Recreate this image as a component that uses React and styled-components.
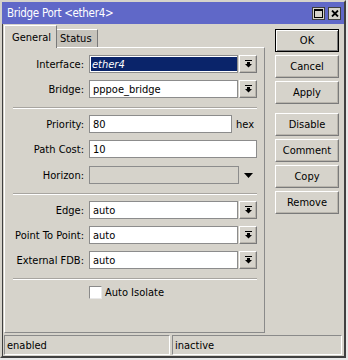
import React from 'react';
import styled, { createGlobalStyle, css } from 'styled-components';

const FACE = '#d6d3cb';
const FONT = '"DejaVu Sans Condensed", "Liberation Sans", sans-serif';

const Global = createGlobalStyle`
  html, body { margin: 0; padding: 0; }
  body {
    background: #e8e8e8;
    width: 348px;
    height: 360px;
    overflow: hidden;
    font-family: ${FONT};
    font-size: 11px;
    color: #000;
  }
`;

const raised = css`
  border: 1px solid;
  border-color: #ffffff #7a7a7a #7a7a7a #ffffff;
  box-shadow: inset -1px -1px 0 #b8b4ac;
`;

const Window = styled.div`
  width: 346px;
  height: 358px;
  box-sizing: border-box;
  background: ${FACE};
  border-style: solid;
  border-width: 2px;
  border-color: ${FACE} #404040 #404040 ${FACE};
  display: flex;
  flex-direction: column;
`;

const TitleBar = styled.div`
  height: 22px;
  flex: none;
  background: #6068c8;
  color: #fff;
  display: flex;
  align-items: center;
  padding: 0 3px 0 5px;
  font-size: 11.5px;
  letter-spacing: -0.3px;
`;

const TitleText = styled.div`
  flex: 1;
  white-space: nowrap;
`;

const TitleButtons = styled.div`
  display: flex;
  gap: 3px;
`;

const TitleButton = styled.div`
  width: 13px;
  height: 13px;
  box-sizing: border-box;
  background: ${FACE};
  border: 1px solid #404040;
  display: flex;
  align-items: center;
  justify-content: center;
`;

const Body = styled.div`
  flex: 1;
  display: flex;
  padding-left: 1px;
  border-left: 1px solid #404040;
  min-height: 0;
`;

const LeftColumn = styled.div`
  width: 261px;
  display: flex;
  flex-direction: column;
  padding: 2px 0 1px;
`;

const Tabs = styled.div`
  display: flex;
  align-items: flex-end;
  height: 22px;
  position: relative;
  z-index: 1;
  margin-bottom: -1px;
`;

const Tab = styled.div`
  box-sizing: border-box;
  border: 1px solid;
  border-bottom: none;
  border-color: #ffffff #7a7a7a #7a7a7a #ffffff;
  display: flex;
  align-items: center;
  ${(p) =>
    p.$active
      ? css`
          width: 53px;
          height: 23px;
          background: ${FACE};
          padding-left: 7px;
        `
      : css`
          width: 41px;
          height: 18px;
          margin-bottom: 1px;
          background: #c6c3bb;
          padding-left: 3px;
          border-left: none;
        `}
`;

const Panel = styled.div`
  flex: 1;
  box-sizing: border-box;
  border: 1px solid;
  border-color: #ffffff #8a8a8a #8a8a8a #ffffff;
  padding-top: 7px;
  display: flex;
  flex-direction: column;
`;

const Row = styled.div`
  display: flex;
  align-items: center;
  height: 18px;
  margin-bottom: 7px;
  margin-top: ${(p) => p.$shift || 0}px;
`;

const Label = styled.div`
  width: 79px;
  text-align: right;
  margin-right: 5px;
  white-space: nowrap;
`;

const Field = styled.div`
  box-sizing: border-box;
  height: 18px;
  width: ${(p) => p.$w}px;
  border: 1px solid #8c8c8c;
  background: ${(p) => (p.$disabled ? FACE : '#fff')};
  padding-left: 3px;
  display: flex;
  align-items: center;
  white-space: nowrap;
  overflow: hidden;
`;

const SelectedText = styled.span`
  background: #0a246a;
  color: #fff;
  font-style: italic;
  display: flex;
  align-items: center;
  height: 14px;
  padding-left: 1px;
  margin-left: -2px;
  flex: 1;
`;

const DropButton = styled.div`
  box-sizing: border-box;
  width: 18px;
  height: 18px;
  margin-left: 1px;
  ${raised};
  background: ${FACE};
  display: flex;
  align-items: center;
  justify-content: center;
`;

const Unit = styled.div`
  margin-left: 4px;
`;

const PlainArrow = styled.div`
  margin-left: 5px;
  display: flex;
`;

const Separator = styled.div`
  height: 0;
  border-top: 1px solid #a8a5a0;
  border-bottom: 1px solid #ffffff;
  margin: 2px 7px 6px 8px;
`;

const CheckRow = styled.label`
  display: flex;
  align-items: center;
  margin-left: 84px;
  height: 13px;
  gap: 3px;
`;

const CheckBox = styled.span`
  box-sizing: border-box;
  width: 13px;
  height: 13px;
  background: #fff;
  border: 1px solid;
  border-color: #8a8a8a #e8e8e8 #e8e8e8 #8a8a8a;
`;

const RightColumn = styled.div`
  margin-left: 10px;
  padding-top: 5px;
  display: flex;
  flex-direction: column;
  width: 64px;
`;

const Button = styled.div`
  box-sizing: border-box;
  width: 64px;
  height: 23px;
  margin-bottom: ${(p) => (p.$groupEnd ? 9 : 3)}px;
  background: ${FACE};
  display: flex;
  align-items: center;
  justify-content: center;
  ${(p) =>
    p.$default
      ? css`
          border: 1px solid #000;
          box-shadow: inset 1px 1px 0 #ffffff, inset -1px -1px 0 #7a7a7a;
        `
      : raised}
`;

const StatusBar = styled.div`
  flex: none;
  display: flex;
  gap: 2px;
  padding: 1px 2px 1px 1px;
  border-left: 1px solid #404040;
`;

const StatusCell = styled.div`
  box-sizing: border-box;
  height: 20px;
  width: ${(p) => p.$w}px;
  border: 1px solid;
  border-color: #8a8a8a #ffffff #ffffff #8a8a8a;
  padding-left: 2px;
  display: flex;
  align-items: center;
`;

const DropIcon = () => (
  <svg width="7" height="8" viewBox="0 0 7 8">
    <rect x="0" y="0" width="7" height="1" fill="#000" />
    <rect x="2" y="2" width="3" height="2" fill="#000" />
    <polygon points="0,4 7,4 3.5,7.5" fill="#000" />
  </svg>
);

const Maximize = () => (
  <svg width="9" height="9" viewBox="0 0 9 9">
    <rect x="0.5" y="0.5" width="8" height="8" fill="none" stroke="#000" />
    <rect x="0" y="0" width="9" height="2" fill="#000" />
  </svg>
);

const Close = () => (
  <svg width="8" height="7" viewBox="0 0 8 7">
    <path d="M1 0.5 L7 6.5 M7 0.5 L1 6.5" stroke="#000" strokeWidth="1.8" />
  </svg>
);

const SelectRow = ({ label, value, selected }) => (
  <Row>
    <Label>{label}</Label>
    <Field $w={149}>{selected ? <SelectedText>{value}</SelectedText> : value}</Field>
    <DropButton>
      <DropIcon />
    </DropButton>
  </Row>
);

export default function App() {
  return (
    <>
      <Global />
      <Window>
        <TitleBar>
          <TitleText>Bridge Port &lt;ether4&gt;</TitleText>
          <TitleButtons>
            <TitleButton>
              <Maximize />
            </TitleButton>
            <TitleButton>
              <Close />
            </TitleButton>
          </TitleButtons>
        </TitleBar>
        <Body>
          <LeftColumn>
            <Tabs>
              <Tab $active>General</Tab>
              <Tab>Status</Tab>
            </Tabs>
            <Panel>
              <SelectRow label="Interface:" value="ether4" selected />
              <SelectRow label="Bridge:" value="pppoe_bridge" />
              <Separator />
              <Row>
                <Label>Priority:</Label>
                <Field $w={143}>80</Field>
                <Unit>hex</Unit>
              </Row>
              <Row>
                <Label>Path Cost:</Label>
                <Field $w={168}>10</Field>
              </Row>
              <Row $shift={1}>
                <Label>Horizon:</Label>
                <Field $w={150} $disabled />
                <PlainArrow>
                  <svg width="9" height="5" viewBox="0 0 9 5">
                    <polygon points="0,0 9,0 4.5,5" fill="#000" />
                  </svg>
                </PlainArrow>
              </Row>
              <Separator />
              <SelectRow label="Edge:" value="auto" />
              <SelectRow label="Point To Point:" value="auto" />
              <SelectRow label="External FDB:" value="auto" />
              <Separator />
              <CheckRow>
                <CheckBox />
                Auto Isolate
              </CheckRow>
            </Panel>
          </LeftColumn>
          <RightColumn>
            <Button $default>OK</Button>
            <Button>Cancel</Button>
            <Button $groupEnd>Apply</Button>
            <Button>Disable</Button>
            <Button>Comment</Button>
            <Button>Copy</Button>
            <Button>Remove</Button>
          </RightColumn>
        </Body>
        <StatusBar>
          <StatusCell $w={166}>enabled</StatusCell>
          <StatusCell $w={170}>inactive</StatusCell>
        </StatusBar>
      </Window>
    </>
  );
}
